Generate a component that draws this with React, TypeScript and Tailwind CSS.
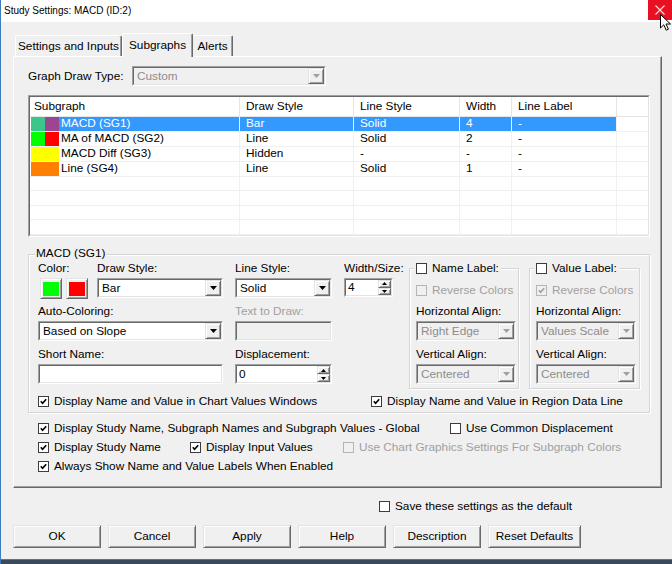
import React from "react";

function Check({ checked, disabled }: { checked?: boolean; disabled?: boolean }) {
  return (
    <span
      className={`flex h-[11px] w-[11px] shrink-0 items-center justify-center border ${
        disabled ? "border-[#b5b5b5] bg-[#f0f0f0]" : "border-[#3c3c3c] bg-white"
      }`}
    >
      {checked && (
        <svg width="7" height="7" viewBox="0 0 7 7">
          <path d="M0.8 3.3 L2.6 5.3 L6.2 1.2" fill="none" stroke={disabled ? "#a0a0a0" : "#000"} strokeWidth="1.6" />
        </svg>
      )}
    </span>
  );
}

function CheckLabel({
  label,
  checked,
  disabled,
  className = "",
}: {
  label: string;
  checked?: boolean;
  disabled?: boolean;
  className?: string;
}) {
  return (
    <div className={`flex h-[13px] items-center gap-[5px] ${className}`}>
      <Check checked={checked} disabled={disabled} />
      <span className={disabled ? "text-[#a0a0a0]" : ""}>{label}</span>
    </div>
  );
}

function Sunken({
  className = "",
  disabled,
  children,
}: {
  className?: string;
  disabled?: boolean;
  children?: React.ReactNode;
}) {
  return (
    <div className={`border border-t-[#a0a0a0] border-l-[#a0a0a0] border-r-white border-b-white ${className}`}>
      <div
        className={`flex h-full items-stretch border border-t-[#696969] border-l-[#696969] border-r-[#e3e3e3] border-b-[#e3e3e3] ${
          disabled ? "bg-[#f0f0f0]" : "bg-white"
        }`}
      >
        {children}
      </div>
    </div>
  );
}

function Raised({ className = "", children }: { className?: string; children?: React.ReactNode }) {
  return (
    <div
      className={`border border-t-[#e3e3e3] border-l-[#e3e3e3] border-r-[#696969] border-b-[#696969] bg-[#f0f0f0] shadow-[inset_1px_1px_0_#fff,inset_-1px_-1px_0_#a0a0a0] ${className}`}
    >
      {children}
    </div>
  );
}

function Combo({ value, className = "", disabled }: { value: string; className?: string; disabled?: boolean }) {
  return (
    <Sunken className={className} disabled={disabled}>
      <span className={`flex flex-1 items-center pl-[3px] ${disabled ? "text-[#8c8c8c]" : ""}`}>{value}</span>
      <Raised className="flex w-[16px] items-center justify-center">
        <svg width="7" height="4" viewBox="0 0 7 4">
          <path d="M0 0 H7 L3.5 4 Z" fill={disabled ? "#a0a0a0" : "#000"} />
        </svg>
      </Raised>
    </Sunken>
  );
}

function Spin({ value, className = "" }: { value: string; className?: string }) {
  return (
    <Sunken className={className}>
      <span className="flex flex-1 items-center pl-[2px]">{value}</span>
      <div className="flex w-[13px] flex-col">
        <Raised className="flex flex-1 items-center justify-center">
          <svg width="5" height="3" viewBox="0 0 5 3">
            <path d="M2.5 0 L5 3 H0 Z" fill="#000" />
          </svg>
        </Raised>
        <Raised className="flex flex-1 items-center justify-center">
          <svg width="5" height="3" viewBox="0 0 5 3">
            <path d="M0 0 H5 L2.5 3 Z" fill="#000" />
          </svg>
        </Raised>
      </div>
    </Sunken>
  );
}

function ColorBtn({ color }: { color: string }) {
  return (
    <Raised className="flex h-[21px] w-[22px] items-center justify-center">
      <span className="h-[14px] w-[16px]" style={{ backgroundColor: color }} />
    </Raised>
  );
}

function Btn({ label, className = "w-[88px]" }: { label: string; className?: string }) {
  return <Raised className={`flex h-[23px] items-center justify-center ${className}`}>{label}</Raised>;
}

const cols = [
  { name: "Subgraph", w: "w-[210px]", pl: "pl-[4px]" },
  { name: "Draw Style", w: "w-[114px]", pl: "pl-[6px]" },
  { name: "Line Style", w: "w-[106px]", pl: "pl-[6px]" },
  { name: "Width", w: "w-[52px]", pl: "pl-[6px]" },
  { name: "Line Label", w: "w-[105px]", pl: "pl-[6px]" },
];

const rows = [
  { sw: ["#3cc78a", "#9b4690"], name: "MACD (SG1)", draw: "Bar", line: "Solid", width: "4", label: "-", sel: true },
  { sw: ["#00ff00", "#ff0000"], name: "MA of MACD (SG2)", draw: "Line", line: "Solid", width: "2", label: "-" },
  { sw: ["#ffff00"], name: "MACD Diff (SG3)", draw: "Hidden", line: "-", width: "-", label: "-" },
  { sw: ["#ff8000"], name: "Line (SG4)", draw: "Line", line: "Solid", width: "1", label: "-" },
  { sw: [], name: "", draw: "", line: "", width: "", label: "" },
  { sw: [], name: "", draw: "", line: "", width: "", label: "" },
  { sw: [], name: "", draw: "", line: "", width: "", label: "" },
  { sw: [], name: "", draw: "", line: "", width: "", label: "" },
];

function SubgraphList() {
  return (
    <Sunken className="mt-[9px] h-[142px] w-[622px]">
      <div className="flex flex-1 flex-col">
        <div className="flex h-[20px] border-b border-[#e5e5e5]">
          {cols.map((c) => (
            <div key={c.name} className={`flex items-center border-r border-[#e5e5e5] ${c.w} ${c.pl}`}>
              {c.name}
            </div>
          ))}
          <div className="flex-1" />
        </div>
        {rows.map((r, i) => {
          const hl = r.sel ? "bg-[#3399ff] text-white" : "";
          return (
            <div key={i} className="flex h-[15px] border-b border-[#f0f0f0]">
              <div className="flex w-[210px] items-stretch border-r border-[#f0f0f0] pl-[1px]">
                <div className="flex w-[28px] items-center">
                  {r.sw.length === 1 && <span className="h-[14px] w-[28px]" style={{ backgroundColor: r.sw[0] }} />}
                  {r.sw.length === 2 &&
                    r.sw.map((c) => <span key={c} className="h-[14px] w-[14px]" style={{ backgroundColor: c }} />)}
                </div>
                <span className={`flex flex-1 items-center pl-[2px] ${hl}`}>{r.name}</span>
              </div>
              <span className={`flex w-[114px] items-center border-r border-[#f0f0f0] pl-[6px] ${hl}`}>{r.draw}</span>
              <span className={`flex w-[106px] items-center border-r border-[#f0f0f0] pl-[6px] ${hl}`}>{r.line}</span>
              <span className={`flex w-[52px] items-center border-r border-[#f0f0f0] pl-[6px] ${hl}`}>{r.width}</span>
              <span className={`flex w-[105px] items-center border-r border-[#f0f0f0] pl-[6px] ${hl}`}>{r.label}</span>
              <span className="flex-1" />
            </div>
          );
        })}
      </div>
    </Sunken>
  );
}

function LabelBox({ title, reverseChecked, hAlign }: { title: string; reverseChecked?: boolean; hAlign: string }) {
  return (
    <div className="relative mt-[6px] h-[121px] border border-[#d5d5d5] pl-[6px] pt-[15px] shadow-[inset_1px_1px_0_#fff,1px_1px_0_#fff]">
      <div className="absolute -top-[7px] left-[4px] bg-[#f0f0f0] px-[2px]">
        <CheckLabel label={title} />
      </div>
      <CheckLabel label="Reverse Colors" checked={reverseChecked} disabled />
      <div className="mt-[8px]">Horizontal Align:</div>
      <Combo value={hAlign} disabled className="mt-[3px] h-[20px] w-[100px]" />
      <div className="mt-[7px]">Vertical Align:</div>
      <Combo value="Centered" disabled className="mt-[3px] h-[20px] w-[100px]" />
    </div>
  );
}

export default function App() {
  return (
    <div className="relative flex h-[564px] w-[672px] flex-col overflow-hidden border-l border-[#3d7bbf] bg-[#f0f0f0] font-['Liberation_Sans',Arial,sans-serif] text-[11.8px] leading-[13px] text-black">
      <div className="flex h-[22px] items-start bg-white">
        <span className="pl-[3px] pt-[4px] text-[10px]">Study Settings: MACD (ID:2)</span>
        <div className="ml-auto flex h-[20px] w-[24px] items-center justify-center bg-[#e81123]">
          <svg width="10" height="10" viewBox="0 0 10 10">
            <path d="M0.5 0.5 L9.5 9.5 M9.5 0.5 L0.5 9.5" stroke="#ffdede" strokeWidth="1.1" />
          </svg>
        </div>
      </div>

      <div className="flex flex-col pl-[12px]">
        <div className="mt-[11px] flex h-[23px] items-end pl-[2px]">
          <div className="flex h-[21px] w-[107px] items-center justify-center rounded-t-[2px] border-t border-l border-white border-r border-r-[#696969] shadow-[inset_-1px_0_0_#a0a0a0]">
            Settings and Inputs
          </div>
          <div className="relative z-10 -mb-[1px] flex h-[24px] w-[71px] items-start justify-center rounded-t-[2px] border-t border-l border-white border-r border-r-[#696969] bg-[#f0f0f0] pt-[5px] shadow-[inset_-1px_0_0_#a0a0a0]">
            Subgraphs
          </div>
          <div className="flex h-[21px] w-[40px] items-center justify-center rounded-t-[2px] border-t border-r border-t-white border-r-[#696969] shadow-[inset_-1px_0_0_#a0a0a0]">
            Alerts
          </div>
        </div>

        <div className="h-[432px] w-[649px] border border-t-white border-l-white border-r-[#696969] border-b-[#696969] pl-[14px] pt-[9px] shadow-[inset_-1px_-1px_0_#a0a0a0]">
          <div className="flex h-[20px] items-center">
            <span className="w-[104px]">Graph Draw Type:</span>
            <Combo value="Custom" disabled className="h-[20px] w-[194px]" />
          </div>

          <SubgraphList />

          <div className="relative mt-[17px] h-[159px] w-[622px] border border-[#d5d5d5] shadow-[inset_1px_1px_0_#fff,1px_1px_0_#fff]">
            <span className="absolute -top-[8px] left-[6px] bg-[#f0f0f0] px-[1px]">MACD (SG1)</span>
            <div className="flex items-start pl-[9px] pt-[7px]">
              <div className="flex w-[185px] flex-col">
                <div className="flex">
                  <span className="w-[59px]">Color:</span>
                  <span>Draw Style:</span>
                </div>
                <div className="mt-[3px] flex items-start">
                  <div className="ml-[2px] flex gap-[4px]">
                    <ColorBtn color="#00ff00" />
                    <ColorBtn color="#ff0000" />
                  </div>
                  <Combo value="Bar" className="ml-[9px] h-[20px] w-[126px]" />
                </div>
                <div className="mt-[6px]">Auto-Coloring:</div>
                <Combo value="Based on Slope" className="mt-[3px] h-[20px] w-[185px]" />
                <div className="mt-[7px]">Short Name:</div>
                <Sunken className="mt-[3px] h-[20px] w-[185px]" />
              </div>

              <div className="ml-[12px] flex w-[97px] flex-col">
                <div>Line Style:</div>
                <Combo value="Solid" className="mt-[3px] h-[20px] w-[97px]" />
                <div className="mt-[7px] text-[#a0a0a0]">Text to Draw:</div>
                <Sunken disabled className="mt-[3px] h-[20px] w-[97px]" />
                <div className="mt-[7px]">Displacement:</div>
                <Spin value="0" className="mt-[3px] h-[20px] w-[97px]" />
              </div>

              <div className="ml-[12px] flex w-[49px] flex-col">
                <div className="whitespace-nowrap">Width/Size:</div>
                <Spin value="4" className="mt-[3px] h-[19px] w-[49px]" />
              </div>

              <div className="ml-[16px] w-[110px]">
                <LabelBox title="Name Label:" hAlign="Right Edge" />
              </div>
              <div className="ml-[10px] w-[111px]">
                <LabelBox title="Value Label:" reverseChecked hAlign="Values Scale" />
              </div>
            </div>
            <div className="mt-[6px] flex pl-[9px]">
              <div className="w-[333px]">
                <CheckLabel label="Display Name and Value in Chart Values Windows" checked />
              </div>
              <CheckLabel label="Display Name and Value in Region Data Line" checked />
            </div>
          </div>

          <div className="ml-[10px] mt-[9px] flex flex-col gap-[6px]">
            <div className="flex">
              <div className="w-[412px]">
                <CheckLabel label="Display Study Name, Subgraph Names and Subgraph Values - Global" checked />
              </div>
              <CheckLabel label="Use Common Displacement" />
            </div>
            <div className="flex">
              <div className="w-[152px]">
                <CheckLabel label="Display Study Name" checked />
              </div>
              <div className="w-[153px]">
                <CheckLabel label="Display Input Values" checked />
              </div>
              <CheckLabel label="Use Chart Graphics Settings For Subgraph Colors" disabled />
            </div>
            <CheckLabel label="Always Show Name and Value Labels When Enabled" checked />
          </div>
        </div>

        <div className="ml-[366px] mt-[12px]">
          <CheckLabel label="Save these settings as the default" />
        </div>

        <div className="mt-[12px] flex gap-[7px]">
          <Btn label="OK" />
          <Btn label="Cancel" />
          <Btn label="Apply" />
          <Btn label="Help" />
          <Btn label="Description" />
          <Btn label="Reset Defaults" className="w-[93px]" />
        </div>
      </div>

      <div className="mt-auto h-[5px] border-t border-[#3d7bbf] bg-[#3a4a5c]" />

      <svg className="absolute left-[659px] top-[14px]" width="12" height="18" viewBox="0 0 12 18">
        <path d="M0.5 0.5 V14 L3.8 10.8 L6.2 16.2 L8.4 15.2 L6 10 H10.5 Z" fill="#fff" stroke="#000" strokeWidth="1" />
      </svg>
    </div>
  );
}
